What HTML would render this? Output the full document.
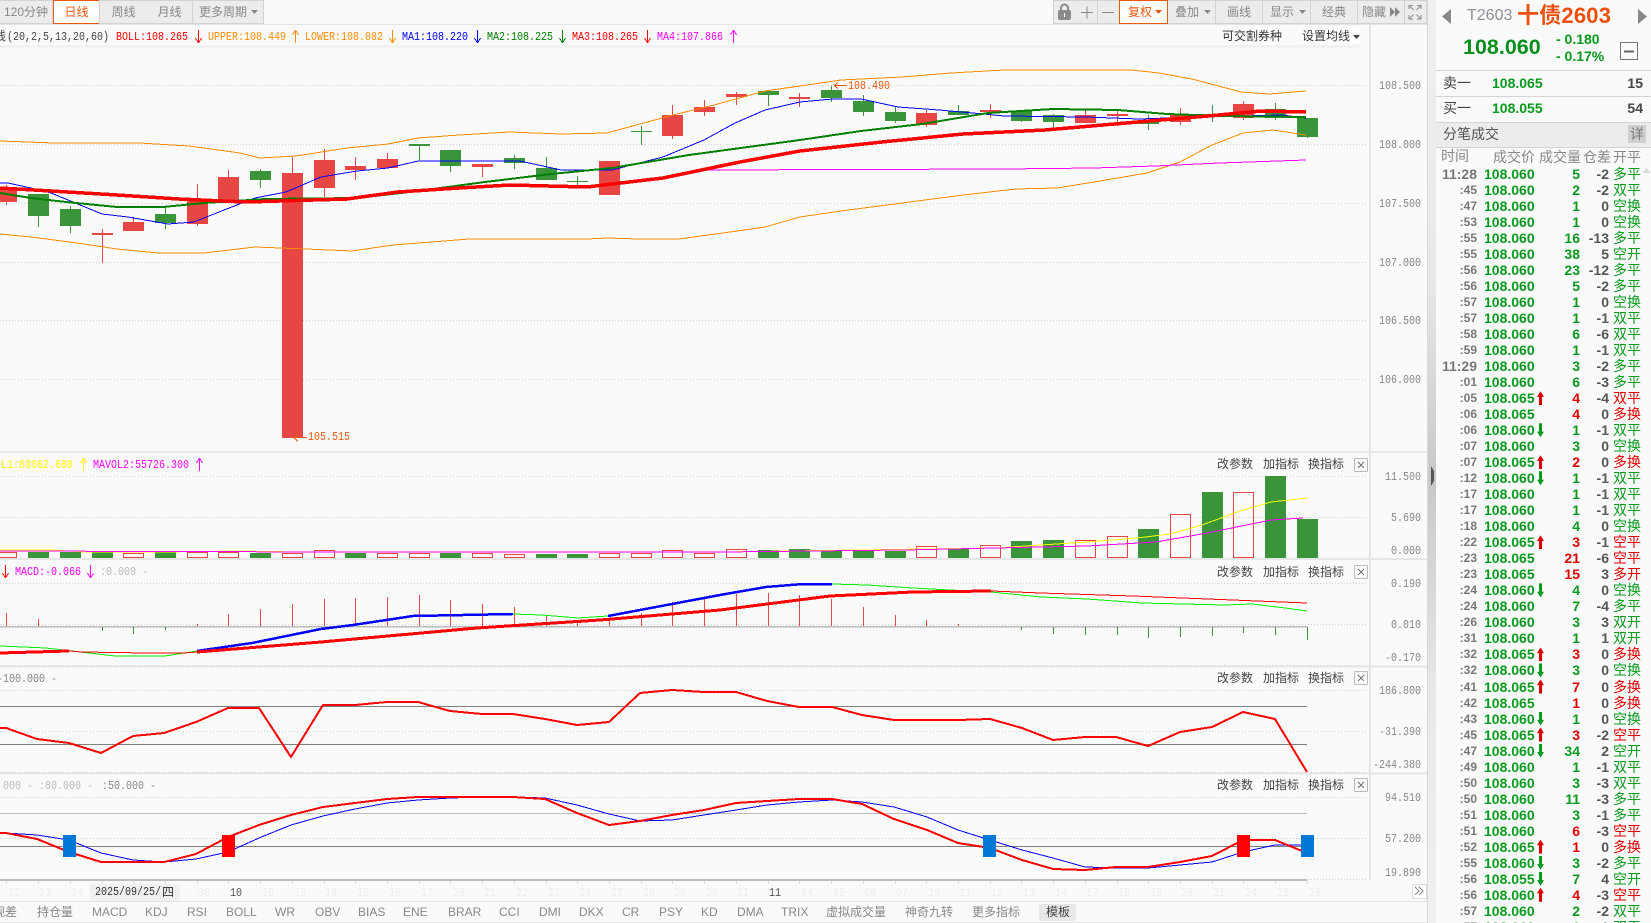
<!DOCTYPE html>
<html lang="zh"><head><meta charset="utf-8"><title>T2603</title>
<style>
html,body{margin:0;padding:0}
html{overflow:hidden;width:1651px;height:923px}
body{position:relative;width:1651px;height:923px;overflow:hidden;background:#fafafa;font-family:"Liberation Sans","WenQuanYi Zen Hei","Noto Sans CJK SC",sans-serif;font-size:12px;color:#444}
svg.o{position:absolute;left:0;top:0}
.t{position:absolute;white-space:nowrap;line-height:14px;height:14px}
.m{font-family:"Liberation Mono","WenQuanYi Zen Hei",monospace;font-size:12px;line-height:14px;height:14px;transform:scaleX(.8333);transform-origin:0 50%}
.ax{width:72px;text-align:right;left:1349px;color:#888;transform-origin:100% 50%}
.tb{position:absolute;top:0;height:22px;background:#ececec;border:1px solid #d2d2d2;border-left:0;box-sizing:content-box;text-align:center;line-height:22px;color:#888;font-size:12px;white-space:nowrap}
.bt{color:#888;top:905px}
.pb{color:#444}
.d0{color:#ededed;top:886px}
.side{position:absolute;left:1436px;top:0;width:215px;height:923px;background:#fafafa;overflow:hidden}
#rows{position:absolute;left:0;top:166px;width:215px}
.r{position:relative;height:16.03px;line-height:16px;white-space:nowrap}
.r>*{position:absolute;top:0;font-style:normal;text-decoration:none}
.r .a{right:174px;color:#777;font-size:12px}
.r .h{right:174px;color:#777;font-size:14px;font-weight:bold}
.r .p{left:48px;color:#0a9a1e;font-size:14px;font-weight:bold}
.r .v{right:71px;font-size:14px;font-weight:bold;color:#0a9a1e}
.r .d{right:42px;font-size:14px;font-weight:bold;color:#555}
.r .k{left:177px;font-size:14px;color:#0a9a1e}
.r .red{color:#e00000}
.r .u,.r .n{left:101px;top:1px;width:7px;height:14px}
.r .u{background:#d80000;clip-path:polygon(50% 0,100% 40%,72% 40%,72% 100%,28% 100%,28% 40%,0 40%)}
.r .n{background:#0a9a1e;clip-path:polygon(50% 100%,100% 60%,72% 60%,72% 0,28% 0,28% 60%,0 60%)}
</style></head><body>

<svg class="o" width="1651" height="923" viewBox="0 0 1651 923" fill="none" shape-rendering="crispEdges">
<!-- structure lines -->
<path d="M0 24.5H1428" stroke="#e2e2e2"/>
<path d="M0 46.5H1360" stroke="#eeeeee" stroke-width="2"/>
<path d="M1370 25V880" stroke="#e4e4e4" stroke-width="2"/>
<path d="M0 452H1427M0 559H1427M0 666.5H1427M0 773.5H1427" stroke="#e6e6e6" stroke-width="2"/>
<rect x="1427" y="0" width="1" height="923" fill="#d8d8d8"/>
<!-- dotted grid -->
<path d="M0 85.5H1367M0 144.5H1367M0 203.5H1367M0 262.5H1367M0 320.5H1367M0 379.5H1367M0 476.5H1367M0 517.5H1367M0 583.5H1367M0 624.5H1367M0 665.5H1367M0 690.5H1367M0 731.5H1367M0 772.5H1367M0 797.5H1367M0 838.5H1367M0 879.5H1367" stroke="#cfcfcf" stroke-dasharray="1 2"/>

<!-- candles -->
<path stroke="#e84545" d="M6.5 185V205M102.5 229V263M133.5 217V231M197.5 184V226M228.5 170V200M292.5 157V173M324.5 149V197M355.5 157V180M387.5 153V168M482.5 164V177M609.5 161V195M672.5 105V139M704.5 100V116M736.5 92V105M799.5 93V107M926.5 110V127M990.5 104V118M1085.5 110V123M1117.5 110V126M1180.5 108V125M1243.5 101V120"/>
<path stroke="#3a943a" d="M38.5 194V227M70.5 206V233M165.5 206V229M260.5 169V188M419.5 146V160M450.5 166V172M514.5 155V169M546.5 157V180M577.5 176V185M641.5 126V145M768.5 90V106M831.5 86V102M863.5 95V116M895.5 106V123M958.5 105V115M1021.5 111V122M1053.5 114V128M1148.5 115V130M1212.5 105V122M1275.5 103V120M1307.5 118V138"/>
<path fill="#e84545" d="M-4 190h21v12h-21zM92 233h21v2h-21zM123 222h21v9h-21zM187 200h21v24h-21zM218 177h21v23h-21zM282 173h21v265h-21zM314 160h21v28h-21zM345 166h21v4h-21zM377 159h21v9h-21zM472 164h21v3h-21zM599 161h21v34h-21zM662 115h21v21h-21zM694 107h21v5h-21zM726 94h21v3h-21zM789 97h21v2h-21zM916 113h21v12h-21zM980 110h21v2h-21zM1075 115h21v8h-21zM1107 114h21v2h-21zM1170 115h21v7h-21zM1233 104h21v14h-21z"/>
<path fill="#3a943a" d="M28 194h21v22h-21zM60 209h21v17h-21zM155 214h21v9h-21zM250 171h21v9h-21zM409 144h21v2h-21zM440 150h21v16h-21zM504 158h21v5h-21zM536 168h21v12h-21zM567 181h21v1h-21zM631 131h21v1h-21zM758 91h21v4h-21zM821 90h21v8h-21zM853 101h21v11h-21zM885 112h21v9h-21zM948 111h21v4h-21zM1011 111h21v10h-21zM1043 115h21v7h-21zM1138 122h21v2h-21zM1202 114h21v2h-21zM1265 109h21v9h-21zM1297 118h21v19h-21z"/>
<!-- overlays -->
<polyline stroke="#ff8c00" points="0,141 54,143 140,143 189,146 240,153 260,158 296,156 347,148 388,144 418,138 459,135 510,132 561,134 607,133 640,124 673,115 714,105 765,91 800,86 841,80 902,77 951,73 1004,70 1131,70 1159,73 1192,79 1241,92 1269,94 1306,91"/>
<polyline stroke="#ff8c00" points="0,234 31,237 77,243 117,249 158,253 204,253 255,247 306,249 352,251 393,245 444,241 469,239 587,239 607,238 638,239 679,239 730,232 765,227 800,217 841,211 902,203 963,195 1016,189 1057,188 1094,182 1147,173 1180,162 1212,145 1243,133 1273,130 1306,135"/>
<polyline stroke="#ff00ff" points="704,170 1004,169 1094,168 1155,166 1220,163 1306,160"/>
<polyline stroke="#0000ff" points="0,183 8,183 31,188 51,193 102,214 128,217 168,224 194,222 224,210 255,198 286,192 321,177 357,171 388,168 418,161 520,161 561,170 612,170 663,157 704,140 735,123 765,110 800,102 833,99 861,99 898,107 939,110 984,114 1004,116 1086,117 1139,119 1167,118 1281,115 1306,118"/>
<polyline stroke="#008000" stroke-width="2" points="0,193 31,198 66,202 117,207 163,207 204,203 265,199 357,198 418,191 485,182 551,174 612,168 689,155 800,140 861,131 922,124 988,113 1053,109 1118,110 1167,114 1224,116 1306,117"/>
<polyline stroke="#ff0000" stroke-width="3.500" points="0,188 51,191 117,195 179,199 245,202 347,199 398,192 459,188 510,185 587,187 663,178 740,162 800,151 882,142 963,134 1045,130 1126,123 1208,116 1261,111 1306,112"/>
<!-- high/low markers -->
<path stroke="#e8590c" d="M834 85.500H847M834 85.500l4-3M834 85.500l4 3M294 437.500H307M294 437.500l4-4M294 437.500l4 4"/>

<!-- legend arrows -->
<g stroke-width="1">
<path stroke="#ff0000" d="M198.500 30V43M198.500 43l-3-5M198.500 43l3-5M647.500 30V43M647.500 43l-3-5M647.500 43l3-5"/>
<path stroke="#ff8c00" d="M295.500 30V43M295.500 30l-3 5M295.500 30l3 5M392.500 30V43M392.500 43l-3-5M392.500 43l3-5"/>
<path stroke="#0000ff" d="M477.500 30V43M477.500 43l-3-5M477.500 43l3-5"/>
<path stroke="#008000" d="M562.500 30V43M562.500 43l-3-5M562.500 43l3-5"/>
<path stroke="#ff00ff" d="M733.500 30V43M733.500 30l-3 5M733.500 30l3 5M199.500 458V471M199.500 458l-3 5M199.500 458l3 5M90.500 565V578M90.500 578l-3-5M90.500 578l3-5"/>
<path stroke="#ffff00" d="M83.500 458V471M83.500 458l-3 5M83.500 458l3 5"/>
<path stroke="#ff0000" d="M5.500 565V578M5.500 578l-3-5M5.500 578l3-5"/>
</g>

<!-- volume bars -->
<path stroke="#e84545" d="M-3.500 552.500h20v5h-20zM123.500 553.500h20v4h-20zM187.500 552.500h20v5h-20zM218.500 552.500h20v5h-20zM282.500 553.500h20v4h-20zM314.500 550.500h20v7h-20zM377.500 553.500h20v4h-20zM409.500 553.500h20v4h-20zM472.500 553.500h20v4h-20zM504.500 554.500h20v3h-20zM599.500 553.500h20v4h-20zM631.500 553.500h20v4h-20zM662.500 550.500h20v7h-20zM694.500 553.500h20v4h-20zM726.500 549.500h20v8h-20zM916.500 546.500h20v11h-20zM980.500 545.500h20v12h-20zM1075.500 540.500h20v17h-20zM1107.500 536.500h20v21h-20zM1170.500 514.500h20v43h-20zM1233.500 492.500h20v65h-20z"/>
<path fill="#3a943a" d="M28 552h21v6h-21zM60 552h21v6h-21zM92 552h21v6h-21zM155 552h21v6h-21zM250 553h21v5h-21zM345 553h21v5h-21zM440 553h21v5h-21zM536 554h21v4h-21zM567 554h21v4h-21zM758 550h21v8h-21zM789 549h21v9h-21zM821 551h21v7h-21zM853 551h21v7h-21zM885 551h21v7h-21zM948 548h21v10h-21zM1011 541h21v17h-21zM1043 540h21v18h-21zM1138 529h21v29h-21zM1202 492h21v66h-21zM1265 476h21v82h-21zM1297 519h21v39h-21z"/>
<polyline stroke="#ffff00" points="0,550 54,550 85,552 160,552 240,551 300,552 720,552 995,548 1087,542 1137,538 1170,534 1202,525 1240,511 1271,502 1307,498"/>
<polyline stroke="#ff00ff" points="0,551 340,552 720,552 904,550 1087,546 1156,542 1202,534 1271,520 1303,518"/>

<!-- MACD -->
<path stroke="#bbbbbb" stroke-width="1.500" d="M0 626.500H1307"/>
<path stroke="#e84545" d="M6.500 613V626M38.500 619V626M197.500 624V626M228.500 614V626M260.500 609V626M292.500 604V626M324.500 599V626M355.500 598V626M387.500 597V626M419.500 595V626M450.500 600V626M482.500 604V626M514.500 607V626M546.500 615V626M577.500 620V626M609.500 618V626M641.500 613V626M672.500 602V626M704.500 598V626M736.500 594V626M768.500 593V626M799.500 595V626M831.500 599V626M863.500 607V626M895.500 615V626M926.500 620V626M958.500 624V626"/>
<path stroke="#3a943a" d="M102.500 627V631M133.500 627V634M165.500 627V630M1021.500 627V630M1053.500 627V634M1085.500 627V635M1117.500 627V635M1148.500 627V638M1180.500 627V637M1212.500 627V636M1243.500 627V633M1275.500 627V635M1307.500 627V640"/>
<polyline stroke="#00f000" points="0,646 46,648 115,656 165,656 197,651"/>
<polyline stroke="#0000ff" stroke-width="2.500" points="197,651 252,643 321,629 353,625 413,616 513,614"/>
<polyline stroke="#00f000" points="513,614 542,615 578,618 608,616"/>
<polyline stroke="#0000ff" stroke-width="2.500" points="608,616 720,595 766,587 803,584 832,584"/>
<polyline stroke="#00f000" points="832,584 867,585 913,588 950,590 991,592 1041,597 1087,599 1142,603 1225,605 1252,604 1285,608 1307,611"/>
<polyline stroke="#ff0000" stroke-width="3" points="0,653 69,651"/>
<polyline stroke="#ff0000" points="69,651 82,652 147,653 184,653 197,652"/>
<polyline stroke="#ff0000" stroke-width="3" points="197,652 321,642 477,628 600,620 720,610 830,596 913,592 991,591"/>
<polyline stroke="#ff0000" points="991,591 1041,593 1133,596 1307,603"/>

<!-- CCI -->
<path stroke="#808080" d="M0 706.500H1307M0 744.500H1307"/>
<polyline stroke="#ff0000" stroke-width="2" points="0,728 6,728 37,739 69,743 101,753 133,736 164,733 196,722 228,708 259,708 291,757 323,705 355,705 387,702 418,702 450,711 482,714 513,714 545,719 577,725 609,722 640,693 672,690 704,692 736,692 767,701 799,707 832,707 862,715 894,720 927,720 958,720 990,719 1022,728 1053,740 1085,737 1116,737 1148,746 1180,732 1212,727 1243,712 1275,719 1307,772"/>

<!-- KDJ -->
<path stroke="#bdbdbd" d="M0 813.500H1307"/>
<path stroke="#808080" d="M0 846.500H1307"/>
<path stroke="#bdbdbd" stroke-width="2" d="M0 880H1307"/>
<polyline stroke="#0000ff" points="0,833 6,833 37,835 69,840 101,853 133,860 164,862 196,859 228,852 259,838 291,825 323,816 355,809 387,803 418,800 450,798 482,797 513,797 545,798 577,805 609,814 640,821 672,820 704,815 736,810 767,805 799,802 832,800 862,802 894,807 927,817 958,830 990,840 1022,850 1053,858 1085,867 1116,868 1148,868 1180,865 1212,862 1243,852 1275,845 1307,845"/>
<polyline stroke="#ff0000" stroke-width="2" points="0,833 6,833 37,839 69,852 101,862 133,862 164,862 196,854 228,837 259,825 291,815 323,807 355,803 387,799 418,797 450,797 482,797 513,797 545,799 577,813 609,825 640,821 672,815 704,810 736,803 767,801 799,799 832,799 862,804 894,819 927,830 958,843 990,848 1022,860 1053,869 1085,870 1116,867 1148,867 1180,862 1212,856 1243,840 1275,840 1307,853"/>
<path fill="#0078d7" d="M63 835h13v22h-13zM983 835h13v22h-13zM1301 835h13v22h-13z"/>
<path fill="#ff0000" d="M222 835h13v22h-13zM1237 835h13v22h-13z"/>

<!-- bottom ticks -->
<path stroke="#dcdcdc" d="M6.500 881V884M38.500 881V884M70.500 881V884M102.500 881V884M133.500 881V884M165.500 881V884M197.500 881V884M228.500 881V884M260.500 881V884M292.500 881V884M324.500 881V884M355.500 881V884M387.500 881V884M419.500 881V884M450.500 881V884M482.500 881V884M514.500 881V884M546.500 881V884M577.500 881V884M609.500 881V884M641.500 881V884M672.500 881V884M704.500 881V884M736.500 881V884M768.500 881V884M799.500 881V884M831.500 881V884M863.500 881V884M895.500 881V884M926.500 881V884M958.500 881V884M990.500 881V884M1021.500 881V884M1053.500 881V884M1085.500 881V884M1117.500 881V884M1148.500 881V884M1180.500 881V884M1212.500 881V884M1243.500 881V884M1275.500 881V884M1307.500 881V884"/>
<path stroke="#e2e2e2" d="M0 901.500H1427M0 922.500H1427"/>
<rect x="1039" y="904" width="37" height="17" rx="2" fill="#e8e8e8"/>
<rect x="90" y="884" width="90" height="17" rx="2" fill="#f0f0f0"/>
<rect x="1412.500" y="884.500" width="14" height="14" fill="#fff" stroke="#dddddd"/>
<path stroke="#888" d="M1415 887l4 4-4 4M1419 887l4 4-4 4"/>
<!-- close boxes -->
<g stroke="#bbbbbb" fill="#fafafa">
<rect x="1354.500" y="458.500" width="13" height="13" rx="1"/>
<rect x="1354.500" y="565.500" width="13" height="13" rx="1"/>
<rect x="1354.500" y="671.500" width="13" height="13" rx="1"/>
<rect x="1354.500" y="778.500" width="13" height="13" rx="1"/>
</g>
<path stroke="#777" d="M1358 462l6 6M1364 462l-6 6M1358 569l6 6M1364 569l-6 6M1358 675l6 6M1364 675l-6 6M1358 782l6 6M1364 782l-6 6"/>
</svg>

<!-- left tabs -->
<div class="tb" style="left:0;width:52px">120分钟</div>
<div class="tb" style="left:53px;width:45px;background:#fff;border:1px solid #e8590c;color:#e8590c;top:0">日线</div>
<div class="tb" style="left:99px;width:47px;border-left:1px solid #d2d2d2">周线</div>
<div class="tb" style="left:147px;width:45px">月线</div>
<div class="tb" style="left:193px;width:70px;text-align:left;text-indent:6px">更多周期</div>
<!-- right tools -->
<div class="tb" style="left:1053px;width:22px;border-left:1px solid #d2d2d2"></div>
<div class="tb" style="left:1076px;width:21px"></div>
<div class="tb" style="left:1098px;width:21px"></div>
<div class="tb" style="left:1119px;width:47px;background:#fff;border:1px solid #e8590c;color:#e8590c;text-align:left;text-indent:8px">复权</div>
<div class="tb" style="left:1168px;width:47px;text-align:left;text-indent:7px">叠加</div>
<div class="tb" style="left:1216px;width:46px">画线</div>
<div class="tb" style="left:1263px;width:47px;text-align:left;text-indent:7px">显示</div>
<div class="tb" style="left:1311px;width:46px">经典</div>
<div class="tb" style="left:1358px;width:46px;text-align:left;text-indent:4px">隐藏</div>
<div class="tb" style="left:1405px;width:21px"></div>
<svg class="o" width="1651" height="30" viewBox="0 0 1651 30" fill="none">
<path fill="#888" d="M251 10h7l-3.500 4zM1204 10h7l-3.500 4zM1299 10h7l-3.500 4z"/>
<path fill="#e8590c" d="M1155 10h7l-3.500 4z"/>
<rect x="1058" y="10" width="13" height="10" rx="2" fill="#8a8a8a"/>
<path d="M1061 10V8a3.500 3.500 0 0 1 7 0v2" stroke="#8a8a8a" stroke-width="2"/>
<path d="M1064.500 13v4" stroke="#fff"/>
<path d="M1081 12.500h12M1087 6.500v12M1102 12.500h12" stroke="#888"/>
<path fill="#888" d="M1390 7l5 5-5 5zM1395 7l5 5-5 5z"/>
<path stroke="#888" d="M1409 9V5.500h4M1417 5.500h4V9M1409 15v4h4M1417 19h4v-4M1409.500 6l4 4M1420.500 6l-4 4M1409.500 18.500l4-4M1420.500 18.500l-4-4"/>
</svg>

<!-- main legend -->
<div class="t" style="left:-6px;top:29px;color:#444">线</div>
<div class="t m" style="left:7px;top:30px;color:#444">(20,2,5,13,20,60)</div>
<div class="t m" style="left:116px;top:30px;color:#ff0000">BOLL:108.265</div>
<div class="t m" style="left:208px;top:30px;color:#ff8c00">UPPER:108.449</div>
<div class="t m" style="left:305px;top:30px;color:#ff8c00">LOWER:108.082</div>
<div class="t m" style="left:402px;top:30px;color:#0000ff">MA1:108.220</div>
<div class="t m" style="left:487px;top:30px;color:#008000">MA2:108.225</div>
<div class="t m" style="left:572px;top:30px;color:#ff0000">MA3:108.265</div>
<div class="t m" style="left:657px;top:30px;color:#ff00ff">MA4:107.866</div>
<div class="t" style="left:1222px;top:29px;color:#333">可交割券种</div>
<div class="t" style="left:1300px;top:29px;width:60px;background:#fff;color:#333;padding-left:2px;box-sizing:border-box">设置均线</div>
<svg class="o" width="1651" height="50" viewBox="0 0 1651 50"><path fill="#444" d="M1353 35h7l-3.500 4z"/></svg>

<!-- markers -->
<div class="t m" style="left:848px;top:79px;color:#e8590c">108.490</div>
<div class="t m" style="left:308px;top:430px;color:#e8590c">105.515</div>

<!-- axis -->
<div class="t m ax" style="top:79px">108.500</div>
<div class="t m ax" style="top:138px">108.000</div>
<div class="t m ax" style="top:197px">107.500</div>
<div class="t m ax" style="top:256px">107.000</div>
<div class="t m ax" style="top:314px">106.500</div>
<div class="t m ax" style="top:373px">106.000</div>
<div class="t m ax" style="top:470px">11.500</div>
<div class="t m ax" style="top:511px">5.690</div>
<div class="t m ax" style="top:544px">0.000</div>
<div class="t m ax" style="top:577px">0.190</div>
<div class="t m ax" style="top:618px">0.010</div>
<div class="t m ax" style="top:651px">-0.170</div>
<div class="t m ax" style="top:684px">186.800</div>
<div class="t m ax" style="top:725px">-31.390</div>
<div class="t m ax" style="top:758px">-244.380</div>
<div class="t m ax" style="top:791px">94.510</div>
<div class="t m ax" style="top:832px">57.200</div>
<div class="t m ax" style="top:866px">19.890</div>

<!-- sub-panel legends -->
<div class="t m" style="left:-5px;top:458px;color:#ffff00">OL1:83062.600</div>
<div class="t m" style="left:93px;top:458px;color:#ff00ff">MAVOL2:55726.300</div>
<div class="t m" style="left:15px;top:565px;color:#ff00ff">MACD:-0.066</div>
<div class="t m" style="left:100px;top:565px;color:#bbb">:0.000 -</div>
<div class="t m" style="left:-3px;top:672px;color:#888">-100.000 -</div>
<div class="t m" style="left:3px;top:779px;color:#bbb">000 - :80.000 -</div>
<div class="t m" style="left:102px;top:779px;color:#888">:50.000 -</div>

<div class="t pb" style="left:1217px;top:457px">改参数</div><div class="t pb" style="left:1263px;top:457px">加指标</div><div class="t pb" style="left:1308px;top:457px">换指标</div>
<div class="t pb" style="left:1217px;top:565px">改参数</div><div class="t pb" style="left:1263px;top:565px">加指标</div><div class="t pb" style="left:1308px;top:565px">换指标</div>
<div class="t pb" style="left:1217px;top:671px">改参数</div><div class="t pb" style="left:1263px;top:671px">加指标</div><div class="t pb" style="left:1308px;top:671px">换指标</div>
<div class="t pb" style="left:1217px;top:778px">改参数</div><div class="t pb" style="left:1263px;top:778px">加指标</div><div class="t pb" style="left:1308px;top:778px">换指标</div>

<!-- date row -->
<div class="t m d0" style="left:8px">22</div>
<div class="t m d0" style="left:39px">23</div>
<div class="t m d0" style="left:71px">24</div>
<div class="t m d0" style="left:198px">30</div>
<div class="t m" style="left:230px;top:886px;color:#555">10</div>
<div class="t m d0" style="left:262px">10</div>
<div class="t m d0" style="left:294px">13</div>
<div class="t m d0" style="left:325px">14</div>
<div class="t m d0" style="left:357px">15</div>
<div class="t m d0" style="left:389px">16</div>
<div class="t m d0" style="left:421px">17</div>
<div class="t m d0" style="left:453px">20</div>
<div class="t m d0" style="left:484px">21</div>
<div class="t m d0" style="left:516px">22</div>
<div class="t m d0" style="left:548px">23</div>
<div class="t m d0" style="left:579px">24</div>
<div class="t m d0" style="left:611px">27</div>
<div class="t m d0" style="left:643px">28</div>
<div class="t m d0" style="left:674px">29</div>
<div class="t m d0" style="left:706px">30</div>
<div class="t m d0" style="left:737px">31</div>
<div class="t m" style="left:769px;top:886px;color:#555">11</div>
<div class="t m d0" style="left:801px">04</div>
<div class="t m d0" style="left:833px">05</div>
<div class="t m d0" style="left:864px">06</div>
<div class="t m d0" style="left:896px">07</div>
<div class="t m d0" style="left:928px">10</div>
<div class="t m d0" style="left:959px">11</div>
<div class="t m d0" style="left:991px">12</div>
<div class="t m d0" style="left:1023px">13</div>
<div class="t m d0" style="left:1055px">14</div>
<div class="t m d0" style="left:1086px">17</div>
<div class="t m d0" style="left:1118px">18</div>
<div class="t m d0" style="left:1150px">19</div>
<div class="t m d0" style="left:1181px">20</div>
<div class="t m d0" style="left:1213px">21</div>
<div class="t m d0" style="left:1245px">24</div>
<div class="t m d0" style="left:1277px">25</div>
<div class="t m d0" style="left:1309px">26</div>
<div class="t m" style="left:95px;top:885px;color:#333">2025/09/25/</div>
<div class="t" style="left:162px;top:885px;color:#333">四</div>

<!-- bottom tabs -->
<div class="t bt" style="left:-7px">观差</div>
<div class="t bt" style="left:37px">持仓量</div>
<div class="t bt" style="left:92px">MACD</div>
<div class="t bt" style="left:145px">KDJ</div>
<div class="t bt" style="left:187px">RSI</div>
<div class="t bt" style="left:226px">BOLL</div>
<div class="t bt" style="left:275px">WR</div>
<div class="t bt" style="left:315px">OBV</div>
<div class="t bt" style="left:358px">BIAS</div>
<div class="t bt" style="left:403px">ENE</div>
<div class="t bt" style="left:448px">BRAR</div>
<div class="t bt" style="left:499px">CCI</div>
<div class="t bt" style="left:539px">DMI</div>
<div class="t bt" style="left:579px">DKX</div>
<div class="t bt" style="left:622px">CR</div>
<div class="t bt" style="left:659px">PSY</div>
<div class="t bt" style="left:701px">KD</div>
<div class="t bt" style="left:737px">DMA</div>
<div class="t bt" style="left:781px">TRIX</div>
<div class="t bt" style="left:826px">虚拟成交量</div>
<div class="t bt" style="left:905px">神奇九转</div>
<div class="t bt" style="left:972px">更多指标</div>
<div class="t bt" style="left:1046px;color:#444">模板</div>

<!-- divider strip -->
<div style="position:absolute;left:1428px;top:0;width:8px;height:923px;background:linear-gradient(to bottom,#f0f0f0 0,#e8e8e8 30%,#c8c8c8 52%,#e8e8e8 75%,#f0f0f0 100%)"></div>
<svg class="o" width="1651" height="923" viewBox="0 0 1651 923"><path fill="#555" d="M1431 466l3 5v10l-3 5z"/></svg>

<!-- right panel -->
<div class="side">
<svg class="o" width="215" height="180" viewBox="0 0 215 180" fill="none">
<path fill="#888" d="M15 9v15l-9-7.500z"/>
<path fill="#888" d="M202 9v15l9-7.500z"/>
<rect x="184.500" y="42.500" width="17" height="17" stroke="#777"/>
<path d="M188 51.500h10" stroke="#666" stroke-width="2"/>
<path d="M0 70.500H215M0 96.500H215M0 122.500H215" stroke="#d4d4d4"/>
<rect x="0" y="123" width="215" height="24" fill="#ececec"/>
<path d="M0 147.500H215" stroke="#d4d4d4"/>
<rect x="192" y="125" width="18" height="18" fill="#cfcfcf"/>
<path fill="#dcdcdc" d="M206 173l4.500-5 4.500 5z"/>
</svg>
<div class="t" style="left:31px;top:7px;font-size:16px;line-height:18px;height:18px;color:#8a9096">T2603</div>
<div class="t" style="left:81px;top:2px;font-size:22px;line-height:27px;height:27px;color:#ee4f0c;font-weight:bold;letter-spacing:.2px">十债2603</div>
<div class="t" style="left:27px;top:34px;font-size:21.500px;line-height:26px;height:26px;font-weight:bold;color:#0a8f1e">108.060</div>
<div class="t" style="left:120px;top:31px;font-size:14px;line-height:16px;height:16px;font-weight:bold;color:#0a9a1e">- 0.180</div>
<div class="t" style="left:120px;top:48px;font-size:14px;line-height:16px;height:16px;font-weight:bold;color:#0a9a1e">- 0.17%</div>

<div class="t" style="left:7px;top:75px;font-size:14px;line-height:16px;height:16px;color:#444">卖一</div>
<div class="t" style="left:56px;top:75px;font-size:14px;line-height:16px;height:16px;font-weight:bold;color:#0a9a1e">108.065</div>
<div class="t" style="right:8px;top:75px;font-size:14px;line-height:16px;height:16px;font-weight:bold;color:#444">15</div>
<div class="t" style="left:7px;top:100px;font-size:14px;line-height:16px;height:16px;color:#444">买一</div>
<div class="t" style="left:56px;top:100px;font-size:14px;line-height:16px;height:16px;font-weight:bold;color:#0a9a1e">108.055</div>
<div class="t" style="right:8px;top:100px;font-size:14px;line-height:16px;height:16px;font-weight:bold;color:#444">54</div>
<div class="t" style="left:7px;top:126px;font-size:14px;line-height:16px;height:16px;color:#555">分笔成交</div>
<div class="t" style="left:194px;top:126px;font-size:14px;line-height:16px;height:16px;color:#777">详</div>

<div class="t" style="left:5px;top:148px;font-size:14px;line-height:16px;height:16px;color:#888">时间</div>
<div class="t" style="left:57px;top:149px;font-size:14px;line-height:16px;height:16px;color:#888">成交价</div>
<div class="t" style="left:103px;top:149px;font-size:14px;line-height:16px;height:16px;color:#888">成交量</div>
<div class="t" style="left:147px;top:149px;font-size:14px;line-height:16px;height:16px;color:#888">仓差</div>
<div class="t" style="left:177px;top:149px;font-size:14px;line-height:16px;height:16px;color:#888">开平</div>

<div id="rows">
<div class="r"><b class="h">11:28</b><b class="p">108.060</b><b class="v">5</b><b class="d">-2</b><i class="k">多平</i></div>
<div class="r"><b class="a">:45</b><b class="p">108.060</b><b class="v">2</b><b class="d">-2</b><i class="k">双平</i></div>
<div class="r"><b class="a">:47</b><b class="p">108.060</b><b class="v">1</b><b class="d">0</b><i class="k">空换</i></div>
<div class="r"><b class="a">:53</b><b class="p">108.060</b><b class="v">1</b><b class="d">0</b><i class="k">空换</i></div>
<div class="r"><b class="a">:55</b><b class="p">108.060</b><b class="v">16</b><b class="d">-13</b><i class="k">多平</i></div>
<div class="r"><b class="a">:55</b><b class="p">108.060</b><b class="v">38</b><b class="d">5</b><i class="k">空开</i></div>
<div class="r"><b class="a">:56</b><b class="p">108.060</b><b class="v">23</b><b class="d">-12</b><i class="k">多平</i></div>
<div class="r"><b class="a">:56</b><b class="p">108.060</b><b class="v">5</b><b class="d">-2</b><i class="k">多平</i></div>
<div class="r"><b class="a">:57</b><b class="p">108.060</b><b class="v">1</b><b class="d">0</b><i class="k">空换</i></div>
<div class="r"><b class="a">:57</b><b class="p">108.060</b><b class="v">1</b><b class="d">-1</b><i class="k">双平</i></div>
<div class="r"><b class="a">:58</b><b class="p">108.060</b><b class="v">6</b><b class="d">-6</b><i class="k">双平</i></div>
<div class="r"><b class="a">:59</b><b class="p">108.060</b><b class="v">1</b><b class="d">-1</b><i class="k">双平</i></div>
<div class="r"><b class="h">11:29</b><b class="p">108.060</b><b class="v">3</b><b class="d">-2</b><i class="k">多平</i></div>
<div class="r"><b class="a">:01</b><b class="p">108.060</b><b class="v">6</b><b class="d">-3</b><i class="k">多平</i></div>
<div class="r"><b class="a">:05</b><b class="p">108.065</b><s class="u"></s><b class="v red">4</b><b class="d">-4</b><i class="k red">双平</i></div>
<div class="r"><b class="a">:06</b><b class="p">108.065</b><b class="v red">4</b><b class="d">0</b><i class="k red">多换</i></div>
<div class="r"><b class="a">:06</b><b class="p">108.060</b><s class="n"></s><b class="v">1</b><b class="d">-1</b><i class="k">双平</i></div>
<div class="r"><b class="a">:07</b><b class="p">108.060</b><b class="v">3</b><b class="d">0</b><i class="k">空换</i></div>
<div class="r"><b class="a">:07</b><b class="p">108.065</b><s class="u"></s><b class="v red">2</b><b class="d">0</b><i class="k red">多换</i></div>
<div class="r"><b class="a">:12</b><b class="p">108.060</b><s class="n"></s><b class="v">1</b><b class="d">-1</b><i class="k">双平</i></div>
<div class="r"><b class="a">:17</b><b class="p">108.060</b><b class="v">1</b><b class="d">-1</b><i class="k">双平</i></div>
<div class="r"><b class="a">:17</b><b class="p">108.060</b><b class="v">1</b><b class="d">-1</b><i class="k">双平</i></div>
<div class="r"><b class="a">:18</b><b class="p">108.060</b><b class="v">4</b><b class="d">0</b><i class="k">空换</i></div>
<div class="r"><b class="a">:22</b><b class="p">108.065</b><s class="u"></s><b class="v red">3</b><b class="d">-1</b><i class="k red">空平</i></div>
<div class="r"><b class="a">:23</b><b class="p">108.065</b><b class="v red">21</b><b class="d">-6</b><i class="k red">空平</i></div>
<div class="r"><b class="a">:23</b><b class="p">108.065</b><b class="v red">15</b><b class="d">3</b><i class="k red">多开</i></div>
<div class="r"><b class="a">:24</b><b class="p">108.060</b><s class="n"></s><b class="v">4</b><b class="d">0</b><i class="k">空换</i></div>
<div class="r"><b class="a">:24</b><b class="p">108.060</b><b class="v">7</b><b class="d">-4</b><i class="k">多平</i></div>
<div class="r"><b class="a">:26</b><b class="p">108.060</b><b class="v">3</b><b class="d">3</b><i class="k">双开</i></div>
<div class="r"><b class="a">:31</b><b class="p">108.060</b><b class="v">1</b><b class="d">1</b><i class="k">双开</i></div>
<div class="r"><b class="a">:32</b><b class="p">108.065</b><s class="u"></s><b class="v red">3</b><b class="d">0</b><i class="k red">多换</i></div>
<div class="r"><b class="a">:32</b><b class="p">108.060</b><s class="n"></s><b class="v">3</b><b class="d">0</b><i class="k">空换</i></div>
<div class="r"><b class="a">:41</b><b class="p">108.065</b><s class="u"></s><b class="v red">7</b><b class="d">0</b><i class="k red">多换</i></div>
<div class="r"><b class="a">:42</b><b class="p">108.065</b><b class="v red">1</b><b class="d">0</b><i class="k red">多换</i></div>
<div class="r"><b class="a">:43</b><b class="p">108.060</b><s class="n"></s><b class="v">1</b><b class="d">0</b><i class="k">空换</i></div>
<div class="r"><b class="a">:45</b><b class="p">108.065</b><s class="u"></s><b class="v red">3</b><b class="d">-2</b><i class="k red">空平</i></div>
<div class="r"><b class="a">:47</b><b class="p">108.060</b><s class="n"></s><b class="v">34</b><b class="d">2</b><i class="k">空开</i></div>
<div class="r"><b class="a">:49</b><b class="p">108.060</b><b class="v">1</b><b class="d">-1</b><i class="k">双平</i></div>
<div class="r"><b class="a">:50</b><b class="p">108.060</b><b class="v">3</b><b class="d">-3</b><i class="k">双平</i></div>
<div class="r"><b class="a">:50</b><b class="p">108.060</b><b class="v">11</b><b class="d">-3</b><i class="k">多平</i></div>
<div class="r"><b class="a">:51</b><b class="p">108.060</b><b class="v">3</b><b class="d">-1</b><i class="k">多平</i></div>
<div class="r"><b class="a">:51</b><b class="p">108.060</b><b class="v red">6</b><b class="d">-3</b><i class="k red">空平</i></div>
<div class="r"><b class="a">:52</b><b class="p">108.065</b><s class="u"></s><b class="v red">1</b><b class="d">0</b><i class="k red">多换</i></div>
<div class="r"><b class="a">:55</b><b class="p">108.060</b><s class="n"></s><b class="v">3</b><b class="d">-2</b><i class="k">多平</i></div>
<div class="r"><b class="a">:56</b><b class="p">108.055</b><s class="n"></s><b class="v">7</b><b class="d">4</b><i class="k">空开</i></div>
<div class="r"><b class="a">:56</b><b class="p">108.060</b><s class="u"></s><b class="v red">4</b><b class="d">-3</b><i class="k red">空平</i></div>
<div class="r"><b class="a">:57</b><b class="p">108.060</b><b class="v">2</b><b class="d">-2</b><i class="k">双平</i></div>
<div class="r"><b class="a">:57</b><b class="p">108.060</b><b class="v">1</b><b class="d">-1</b><i class="k">双平</i></div>
</div>
</div>
</body></html>
